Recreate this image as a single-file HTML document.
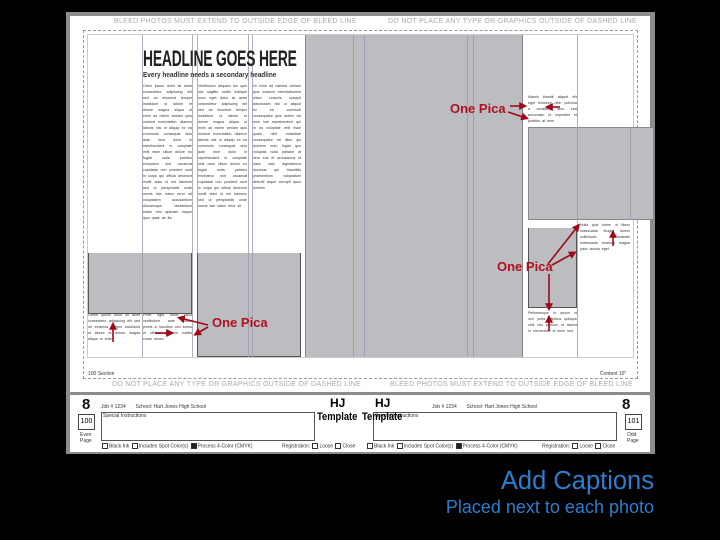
<!DOCTYPE html>
<html><head><meta charset="utf-8"><style>
*{margin:0;padding:0;box-sizing:border-box}
body{width:720px;height:540px;background:#000;position:relative;overflow:hidden;font-family:"Liberation Sans",sans-serif}
.a{position:absolute}
.g{position:absolute;background:#bcbdc1}
.t{position:absolute;font-size:3.6px;line-height:6px;color:#333;overflow:hidden;text-align:justify;word-spacing:1px}
.v{position:absolute;width:1px;background:#b0b0c0}
.cap{position:absolute;font-size:7px;color:#aaa;letter-spacing:.3px;white-space:nowrap}
.s{font-size:5px;color:#333;position:absolute;white-space:nowrap}
.cb{display:inline-block;width:6px;height:6px;border:1px solid #333;vertical-align:middle;margin:0 1px}
</style></head><body>
<div class="a" style="left:66px;top:12px;width:589px;height:442px;background:#8c8c8c"></div>
<div class="a" style="left:70px;top:16px;width:580px;height:376px;background:#fff"></div>
<div class="a" style="left:83px;top:30px;width:555px;height:349px;border:1px dashed #999"></div>
<div class="a" style="left:87px;top:34px;width:547px;height:324px;border:1px solid #ccc;background:#fff"></div>
<div class="cap" style="left:114px;top:18px">BLEED PHOTOS MUST EXTEND TO OUTSIDE EDGE OF BLEED LINE</div>
<div class="cap" style="left:388px;top:18px">DO NOT PLACE ANY TYPE OR GRAPHICS OUTSIDE OF DASHED LINE</div>
<div class="cap" style="left:112px;top:381px">DO NOT PLACE ANY TYPE OR GRAPHICS OUTSIDE OF DASHED LINE</div>
<div class="cap" style="left:390px;top:381px">BLEED PHOTOS MUST EXTEND TO OUTSIDE EDGE OF BLEED LINE</div>
<div class="s" style="left:88px;top:371px">100 Section</div>
<div class="s" style="left:600px;top:371px">Content 10"</div>
<div class="v" style="left:142px;top:35px;height:322px"></div>
<div class="v" style="left:192px;top:35px;height:322px"></div>
<div class="v" style="left:197px;top:35px;height:322px"></div>
<div class="v" style="left:248px;top:35px;height:322px"></div>
<div class="v" style="left:252px;top:35px;height:322px"></div>
<div class="v" style="left:577px;top:35px;height:322px"></div>
<div class="g" style="left:305px;top:35px;width:218px;height:322px;border-left:1px solid #888;border-right:1px solid #888"></div>
<div class="v" style="left:353px;top:35px;height:322px;background:#a0a0b0"></div>
<div class="v" style="left:364px;top:35px;height:322px;background:#a0a0b0"></div>
<div class="v" style="left:467px;top:35px;height:322px;background:#a0a0b0"></div>
<div class="v" style="left:473px;top:35px;height:322px;background:#a0a0b0"></div>
<div class="g" style="left:88px;top:253px;width:104px;height:61px;border:1px solid #555;border-top:none"></div>
<div class="v" style="left:142px;top:253px;height:61px;background:#a0a0b0"></div>
<div class="g" style="left:197px;top:253px;width:104px;height:104px;border:1px solid #555;border-top:none"></div>
<div class="v" style="left:248px;top:253px;height:104px;background:#a0a0b0"></div>
<div class="v" style="left:252px;top:253px;height:104px;background:#a0a0b0"></div>
<div class="g" style="left:528px;top:127px;width:126px;height:93px;border:1px solid #888"></div>
<div class="v" style="left:577px;top:127px;height:93px;background:#a0a0b0"></div>
<div class="v" style="left:630px;top:127px;height:93px;background:#a0a0b0"></div>
<div class="g" style="left:528px;top:228px;width:49px;height:80px;border:1px solid #555;border-top:none"></div>
<div class="a" style="left:143px;top:46px;font-family:'Liberation Sans Narrow','Liberation Sans',sans-serif;font-size:22px;font-weight:bold;color:#222;transform:scaleX(.63);transform-origin:left;white-space:nowrap;letter-spacing:-.3px">HEADLINE GOES HERE</div>
<div class="a" style="left:143px;top:70px;font-size:7.5px;font-weight:bold;color:#333;white-space:nowrap;transform:scaleX(.86);transform-origin:left">Every headline needs a secondary headline</div>
<div class="t" style="left:143px;top:83px;width:49px;height:140px">Orem ipsum dolor sit amet consectetur adipiscing elit sed do eiusmod tempor incididunt ut labore et dolore magna aliqua ut enim ad minim veniam quis nostrud exercitation ullamco laboris nisi ut aliquip ex ea commodo consequat duis aute irure dolor in reprehenderit in voluptate velit esse cillum dolore eu fugiat nulla pariatur excepteur sint occaecat cupidatat non proident sunt in culpa qui officia deserunt mollit anim id est laborum sed ut perspiciatis unde omnis iste natus error sit voluptatem accusantium doloremque laudantium totam rem aperiam eaque ipsa quae ab illo</div>
<div class="t" style="left:198px;top:83px;width:49px;height:140px">Vestibulum aliquam leo quis nisi sagittis mollis tristique nunc eget dolor sit amet consectetur adipiscing elit sed do eiusmod tempor incididunt ut labore et dolore magna aliqua ut enim ad minim veniam quis nostrud exercitation ullamco laboris nisi ut aliquip ex ea commodo consequat duis aute irure dolor in reprehenderit in voluptate velit esse cillum dolore eu fugiat nulla pariatur excepteur sint occaecat cupidatat non proident sunt in culpa qui officia deserunt mollit anim id est laborum sed ut perspiciatis unde omnis iste natus error sit</div>
<div class="t" style="left:253px;top:83px;width:48px;height:140px">Ut enim ad minima veniam quis nostrum exercitationem ullam corporis suscipit laboriosam nisi ut aliquid ex ea commodi consequatur quis autem vel eum iure reprehenderit qui in ea voluptate velit esse quam nihil molestiae consequatur vel illum qui dolorem eum fugiat quo voluptas nulla pariatur at vero eos et accusamus et iusto odio dignissimos ducimus qui blanditiis praesentium voluptatum deleniti atque corrupti quos dolores</div>
<div class="t" style="left:88px;top:312px;width:52px;height:30px">Lorem ipsum dolor sit amet consectetur adipiscing elit sed do eiusmod tempor incididunt ut labore et dolore magna aliqua ut enim</div>
<div class="t" style="left:143px;top:312px;width:49px;height:30px">Proin eget tortor risus vestibulum ante ipsum primis in faucibus orci luctus et ultrices posuere cubilia curae donec</div>
<div class="t" style="left:528px;top:94px;width:49px;height:31px">Mauris blandit aliquet elit eget tincidunt nibh pulvinar a curabitur arcu erat accumsan id imperdiet et porttitor at sem</div>
<div class="t" style="left:580px;top:222px;width:50px;height:31px">Nulla quis lorem ut libero malesuada feugiat donec sollicitudin molestie malesuada vivamus magna justo lacinia eget</div>
<div class="t" style="left:528px;top:310px;width:49px;height:31px">Pellentesque in ipsum id orci porta dapibus quisque velit nisi pretium ut lacinia in elementum id enim sed</div>
<div class="a" style="left:450px;top:101px;font-size:13px;color:#b01020;font-weight:bold">One Pica</div>
<div class="a" style="left:497px;top:259px;font-size:13px;color:#b01020;font-weight:bold">One Pica</div>
<div class="a" style="left:212px;top:315px;font-size:13px;color:#b01020;font-weight:bold">One Pica</div>
<svg class="a" style="left:0;top:0" width="720" height="540">
<defs><marker id="m" markerWidth="5" markerHeight="5" refX="3" refY="2.5" orient="auto"><path d="M0,0L5,2.5L0,5z" fill="#a00818"/></marker></defs>
<g stroke="#a00818" stroke-width="1.6" marker-end="url(#m)">
<line x1="510" y1="106" x2="524" y2="106"/>
<line x1="508" y1="112" x2="526" y2="118"/>
<line x1="560" y1="107" x2="548" y2="107"/>
<line x1="548" y1="264" x2="578" y2="226"/>
<line x1="552" y1="265" x2="574" y2="253"/>
<line x1="613" y1="246" x2="613" y2="233"/>
<line x1="549" y1="274" x2="549" y2="308"/>
<line x1="549" y1="331" x2="549" y2="318"/>
<line x1="208" y1="325" x2="180" y2="318"/>
<line x1="208" y1="327" x2="196" y2="334"/>
<line x1="113" y1="342" x2="113" y2="325"/>
<line x1="155" y1="333" x2="171" y2="333"/>
</g></svg>
<div class="a" style="left:70px;top:395px;width:580px;height:57px;background:#fff"></div>
<div class="a" style="left:82px;top:396px;font-size:15px;font-weight:bold;color:#111">8</div>
<div class="a" style="left:622px;top:396px;font-size:15px;font-weight:bold;color:#111">8</div>
<div class="a" style="left:78px;top:414px;width:17px;height:16px;border:1px solid #444;font-size:7px;text-align:center;line-height:14px">100</div>
<div class="a" style="left:625px;top:414px;width:17px;height:16px;border:1px solid #444;font-size:7px;text-align:center;line-height:14px">101</div>
<div class="s" style="left:80px;top:432px;line-height:6px">Even<br>Page</div>
<div class="s" style="left:627px;top:432px;line-height:6px">Odd<br>Page</div>
<div class="s" style="left:101px;top:404px">Job # 1234&nbsp;&nbsp;&nbsp;&nbsp;&nbsp;&nbsp;&nbsp;School: Hart Jones High School</div>
<div class="s" style="left:432px;top:404px">Job # 1234&nbsp;&nbsp;&nbsp;&nbsp;&nbsp;&nbsp;&nbsp;School: Hart Jones High School</div>
<div class="a" style="left:101px;top:412px;width:214px;height:29px;border:1px solid #555"></div>
<div class="a" style="left:373px;top:412px;width:244px;height:29px;border:1px solid #555"></div>
<div class="s" style="left:103px;top:413px">Special Instructions</div>
<div class="s" style="left:375px;top:413px">Special Instructions</div>
<div class="a" style="left:330px;top:397px;font-size:12px;font-weight:bold;line-height:12px">HJ</div>
<div class="a" style="left:375px;top:397px;font-size:12px;font-weight:bold;line-height:12px">HJ</div>
<div class="a" style="left:317px;top:411px;font-size:11px;font-weight:bold;line-height:12px;transform:scaleX(.85);transform-origin:left">Template</div>
<div class="a" style="left:362px;top:411px;font-size:11px;font-weight:bold;line-height:12px;transform:scaleX(.85);transform-origin:left">Template</div>
<div class="s" style="left:101px;top:443px"><span class="cb"></span>Black Ink <span class="cb"></span>Includes Spot Color(s) <span class="cb" style="background:#222"></span>Process 4-Color (CMYK)</div>
<div class="s" style="left:282px;top:443px">Registration: <span class="cb"></span>Loose <span class="cb"></span>Close</div>
<div class="s" style="left:366px;top:443px"><span class="cb"></span>Black Ink <span class="cb"></span>Includes Spot Color(s) <span class="cb" style="background:#222"></span>Process 4-Color (CMYK)</div>
<div class="s" style="left:542px;top:443px">Registration: <span class="cb"></span>Loose <span class="cb"></span>Close</div>
<div class="a" style="right:66px;top:467px;font-size:25.5px;color:#2a7fd0;white-space:nowrap">Add Captions</div>
<div class="a" style="right:66px;top:497px;font-size:18px;color:#2a7fd0;white-space:nowrap">Placed next to each photo</div>
</body></html>
